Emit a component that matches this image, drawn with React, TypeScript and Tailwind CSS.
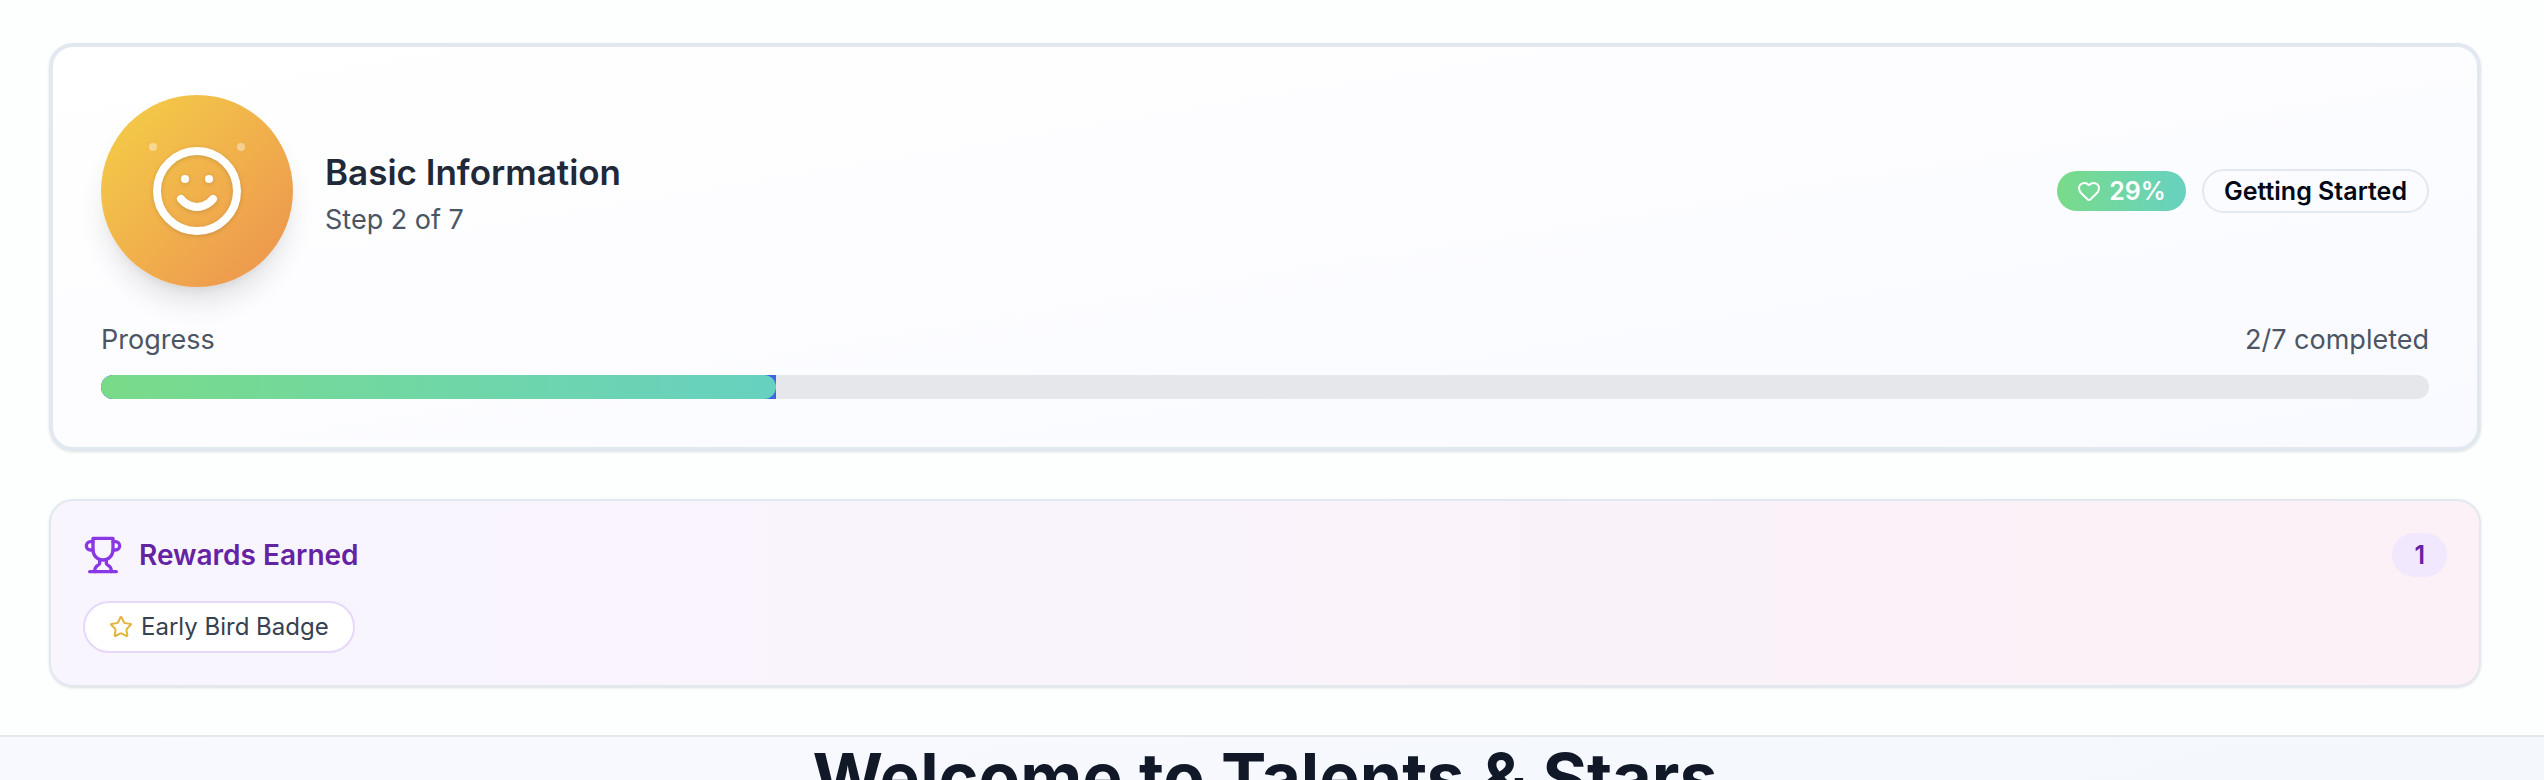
import { Heart, Star } from "lucide-react";

const STEP = 2;
const TOTAL = 7;
const PERCENT = Math.round((STEP / TOTAL) * 100);

function SmileIcon() {
  return (
    <svg
      className="size-24 text-white drop-shadow-sm"
      viewBox="0 0 24 24"
      fill="none"
      stroke="currentColor"
      strokeWidth="2"
      strokeLinecap="round"
      strokeLinejoin="round"
      aria-hidden="true"
    >
      <circle cx="12" cy="12" r="10" />
      <path d="M8 14s1.5 2 4 2 4-2 4-2" />
      <path d="M9 9h.01" />
      <path d="M15 9h.01" />
    </svg>
  );
}

function TrophyIcon() {
  return (
    <svg
      className="size-10 text-[#8a38e6]"
      viewBox="0 0 24 24"
      fill="none"
      stroke="currentColor"
      strokeWidth="2"
      strokeLinecap="round"
      strokeLinejoin="round"
      aria-hidden="true"
    >
      <path d="M6 9H4.5a2.5 2.5 0 0 1 0-5H6" />
      <path d="M18 9h1.5a2.5 2.5 0 0 0 0-5H18" />
      <path d="M4 22h16" />
      <path d="M10 14.66V17c0 .55-.47.98-.97 1.21C7.85 18.75 7 20.24 7 22" />
      <path d="M14 14.66V17c0 .55.47.98.97 1.21C16.15 18.75 17 20.24 17 22" />
      <path d="M18 2H6v7a6 6 0 0 0 12 0V2Z" />
    </svg>
  );
}

function ProgressCard() {
  return (
    <section className="rounded-3xl border-4 border-[#e2e8f0] bg-linear-to-br from-white to-[#f9faff] p-12 shadow-sm">
      <div className="flex items-center justify-between">
        <div className="flex items-center gap-8">
          <div className="flex size-48 items-center justify-center rounded-full bg-linear-to-br from-[#f3d046] to-[#ec914e] shadow-[0_20px_30px_-6px_rgba(0,0,0,0.12),0_8px_12px_-8px_rgba(0,0,0,0.1)]">
            <div className="relative">
              <SmileIcon />
              <span className="absolute top-0 left-0 size-2 rounded-full bg-white/40" />
              <span className="absolute top-0 right-0 size-2 rounded-full bg-white/40" />
            </div>
          </div>
          <div className="pt-0.5">
            <h2 className="text-[35px] leading-14 font-semibold text-[#1f2937]">Basic Information</h2>
            <p className="text-[27px] leading-10 text-[#4b5563]">
              Step {STEP} of {TOTAL}
            </p>
          </div>
        </div>
        <div className="flex items-center gap-4">
          <span className="flex items-center gap-2 rounded-full bg-linear-to-r from-[#79db88] to-[#67d1c0] px-5 py-1 text-[25px] leading-8 font-semibold text-white">
            <Heart className="size-6" aria-hidden="true" />
            {PERCENT}%
          </span>
          <span className="rounded-full border-2 border-[#e2e8f0] px-5 py-1 text-[25px] leading-8 font-semibold text-[#020817]">
            Getting Started
          </span>
        </div>
      </div>
      <div className="mt-8 flex justify-between text-[27px] leading-[42px] text-[#4b5563]">
        <span>Progress</span>
        <span>
          {STEP}/{TOTAL} completed
        </span>
      </div>
      <div
        role="progressbar"
        aria-label="Progress"
        aria-valuenow={PERCENT}
        aria-valuemin={0}
        aria-valuemax={100}
        className="mt-3.5 h-6 overflow-hidden rounded-full bg-[#e5e7eb]"
      >
        <div className="h-full bg-[#3b66e6]" style={{ width: `${PERCENT}%` }}>
          <div className="h-full rounded-full bg-linear-to-r from-[#79db88] to-[#67d1c0]" />
        </div>
      </div>
    </section>
  );
}

function RewardsCard() {
  return (
    <section className="mt-12 rounded-3xl border-2 border-[#e2e8f0] bg-linear-to-r from-[#f8f5ff] to-[#fbf1f6] p-8 shadow-sm">
      <div className="flex items-center justify-between">
        <div className="flex items-center gap-4">
          <TrophyIcon />
          <h3 className="text-[28px] leading-10 font-semibold text-[#6423a3]">Rewards Earned</h3>
        </div>
        <span className="rounded-full border-2 border-[#f1e8fd] bg-[#f1e8fd] px-5 py-1 text-[25px] leading-8 font-semibold text-[#6423a3]">
          1
        </span>
      </div>
      <ul className="mt-6 flex gap-4">
        <li className="flex items-center gap-2 rounded-full border-2 border-[#e7d7fb] bg-white px-6 py-2 text-2xl text-[#374151]">
          <Star className="size-6 text-[#e4b43c]" aria-hidden="true" />
          Early Bird Badge
        </li>
      </ul>
    </section>
  );
}

export default function App() {
  return (
    <div className="h-screen overflow-hidden bg-[#fdfefe] font-['Inter',sans-serif]">
      <header className="border-b-2 border-[#e5e7eb] pt-[43px] pr-[63px] pb-12 pl-[49px]">
        <ProgressCard />
        <RewardsCard />
      </header>
      <main className="min-h-screen bg-linear-to-br from-[#f8f9fe] via-[#f4f8fd] to-[#f2f3fe] pr-[14px]">
        <h1 className="text-center text-[68px] leading-[80px] font-bold text-[#111827]">
          Welcome to Talents &amp; Stars
        </h1>
      </main>
    </div>
  );
}
